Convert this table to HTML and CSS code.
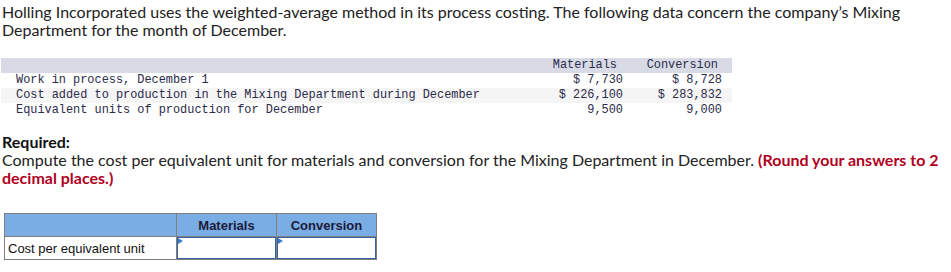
FILE: index.html
```html
<!DOCTYPE html>
<html>
<head>
<meta charset="utf-8">
<link rel="stylesheet" href="styles.css">
</head>
<body>
<p class="intro">Holling Incorporated uses the weighted-average method in its process costing. The following data concern the company’s Mixing Department for the month of December.</p>

<table class="data">
  <thead>
    <tr>
      <th class="lbl"></th>
      <th class="mat">Materials</th>
      <th class="conv">Conversion</th>
    </tr>
  </thead>
  <tbody>
    <tr>
      <td class="lbl">Work in process, December 1</td>
      <td class="mat">$ 7,730</td>
      <td class="conv">$ 8,728</td>
    </tr>
    <tr class="alt">
      <td class="lbl">Cost added to production in the Mixing Department during December</td>
      <td class="mat">$ 226,100</td>
      <td class="conv">$ 283,832</td>
    </tr>
    <tr>
      <td class="lbl">Equivalent units of production for December</td>
      <td class="mat">9,500</td>
      <td class="conv">9,000</td>
    </tr>
  </tbody>
</table>

<p class="req"><b>Required:</b><br>Compute the cost per equivalent unit for materials and conversion for the Mixing Department in December. <span class="red">(Round your answers to 2 decimal places.)</span></p>

<table class="answer">
  <tr class="head">
    <th class="c1"></th>
    <th class="c2">Materials</th>
    <th class="c3">Conversion</th>
  </tr>
  <tr>
    <td class="c1">Cost per equivalent unit</td>
    <td class="c2 inp"><div class="box"><span class="flag"></span></div></td>
    <td class="c3 inp"><div class="box"><span class="flag"></span></div></td>
  </tr>
</table>
</body>
</html>
```

FILE: styles.css
```css
html, body {
  margin: 0;
  padding: 0;
  background: #fff;
}
body {
  padding: 0 2px;
  font-family: Lato, "Liberation Sans", sans-serif;
  font-size: 16px;
  color: #222;
}
.intro {
  margin: 0;
  padding-top: 3px;
  line-height: 18px;
  width: 920px;
}
.data {
  margin: 19px 0 0 -1px;
  border-collapse: collapse;
  font-family: "Liberation Mono", monospace;
  font-size: 11.9px;
  color: #2b2b4a;
  width: 731px;
}
.data th, .data td {
  height: 15px;
  padding: 0;
  line-height: 15px;
  white-space: nowrap;
  font-weight: normal;
}
.data thead tr {
  background: #d8dbe6;
}
.data .lbl {
  padding-left: 15px;
  text-align: left;
}
.data .mat {
  width: 82px;
  text-align: right;
  padding-right: 4px;
}
.data .conv {
  width: 95px;
  text-align: right;
  padding-right: 10px;
}
.data th.mat { padding-right: 10px; width: 76px; }
.data th.conv { padding-right: 14px; width: 91px; }
.data .alt {
  background: #f5f5f5;
}
.req {
  margin: 15px 0 0 0;
  line-height: 18px;
  width: 945px;
}
.req b {
  font-weight: bold;
  color: #111;
}
.red {
  color: #b0001e;
  font-weight: bold;
}
.answer {
  margin: 26px 0 0 2px;
  border-collapse: collapse;
  font-family: "Liberation Sans", Arial, sans-serif;
  font-size: 13px;
}
.answer th, .answer td {
  border: 1px solid #7f7f7f;
  padding: 0;
  height: 22px;
}
.answer .head th {
  background: #7aade4;
  color: #1b1b3a;
  font-weight: bold;
  font-size: 13px;
  text-align: center;
}
.answer .c1 { width: 171px; text-align: left; }
.answer td.c1 { padding-left: 3px; width: 168px; color: #111; }
.answer .c2, .answer .c3 { width: 99px; }
.answer td.inp { padding: 0; }
.box {
  position: relative;
  height: 20px;
  border: 1px solid #3a62a0;
  background: #fff;
}
.flag {
  position: absolute;
  left: 0;
  top: 0;
  width: 0;
  height: 0;
  border-top: 3px solid transparent;
  border-bottom: 3px solid transparent;
  border-left: 5px solid #3b79c9;
}
```
